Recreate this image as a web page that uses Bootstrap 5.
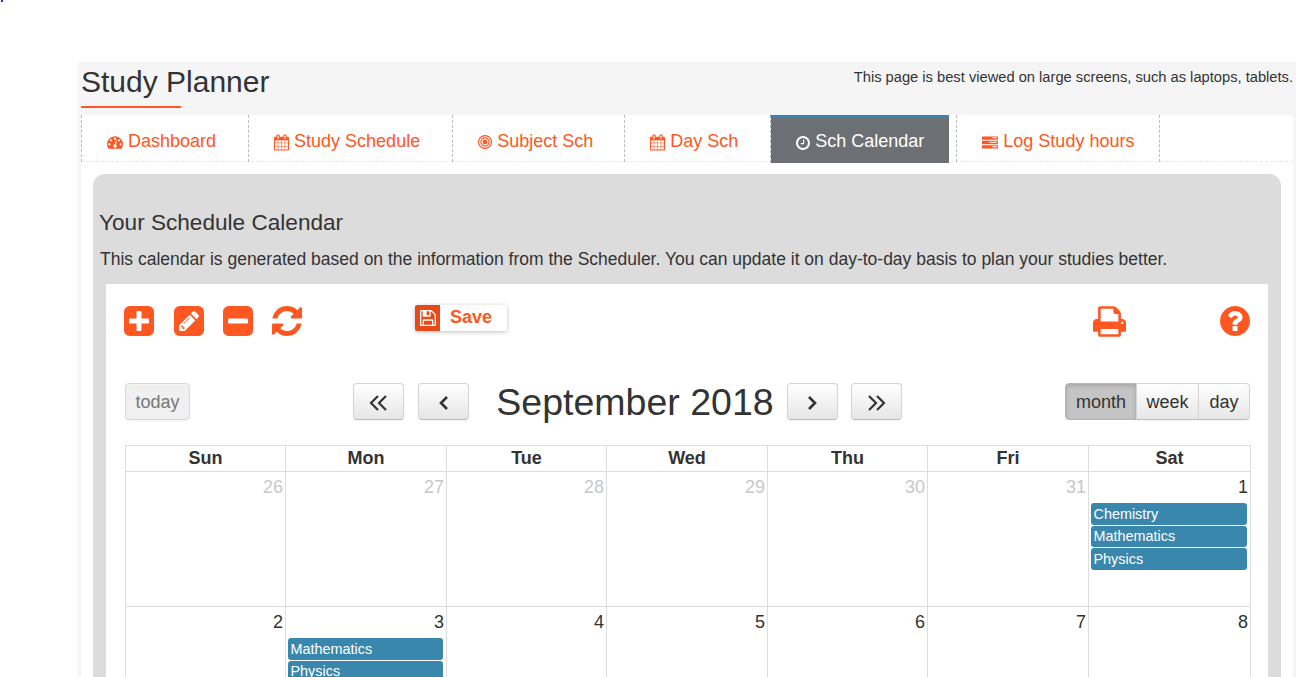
<!DOCTYPE html>
<html lang="en">
<head>
    <meta charset="UTF-8">
    <meta name="viewport" content="width=device-width, initial-scale=1.0">
    <title>Study Planner</title>
    <link href="https://cdn.jsdelivr.net/npm/bootstrap@5.3.0/dist/css/bootstrap.min.css" rel="stylesheet">
    <style>
        html, body { height: 100vh; overflow: hidden; }
        body { font-family: "Liberation Sans", Arial, sans-serif; font-size: 16px; color: #333; background: #fff; }
        .ico { fill: currentColor; display: inline-block; flex: none; }
        .top-dot { height: 62px; }
        .top-speck { display: block; width: 2px; height: 2px; margin-left: 1px; background: #3030e0; }
        .planner-wrap { margin-left: 78px; background: #f5f5f5; padding: 0 3px; }
        .planner-head { height: 53px; }
        .planner-title { font-size: 30px; line-height: 38px; margin: 0; padding-top: 1px; font-weight: 400; }
        .planner-rule { width: 100px; height: 2px; background: #ff5722; margin-top: 5px; }
        .planner-note { font-size: 14.7px; line-height: 20px; padding-top: 5px; }
        .planner-body { background: #fff; border-radius: 4px; }
        .tab-row { height: 47px; border-bottom: 1px dashed #e6e6e6; }
        .tab-item { height: 47px; padding: 5px 32px 0 25px; gap: 5px; font-size: 18px; color: #ff5722; text-decoration: none; border-left: 1px dashed #bbb; }
        .tab-item svg { margin-top: 2px; }
        .tab-item:nth-child(3) { padding-right: 31px; }
        .tab-item:last-child { border-right: 1px dashed #bbb; padding-right: 25px; }
        .tab-item.is-on { background: #6c7074; background-clip: padding-box; color: #fff; border-top: 3px solid #3a87ad; padding: 2px 25px 0; height: 48px; }
        .tab-item.is-on + .tab-item { margin-left: 7px; }
        .grey-panel { margin: 12px 12px 0; background: #dcdcdc; border-radius: 12px; padding: 36px 7px 0 7px; }
        .panel-title { font-size: 22.6px; line-height: 26px; margin: 0 0 12px -1px; font-weight: 400; }
        .panel-text { font-size: 17.5px; line-height: 22px; margin: 0 0 14px; white-space: nowrap; }
        .cal-sheet { margin: 0 6px; background: #fff; padding: 22px 18px 0 18px; }
        .tool-row { height: 31px; }
        .tool-btn { color: #ff5722; line-height: 0; }
        .tool-gap { margin-left: 19px; }
        .tool-gap-wide { margin-left: 20px; }
        .save-btn { width: 92px; height: 26px; margin: -1px 0 0 113px; background: #fff; border-radius: 2px; box-shadow: 0 1px 4px rgba(0,0,0,.25); color: #ff5722; font-weight: 700; font-size: 18px; overflow: hidden; }
        .save-ico { width: 25px; height: 26px; background: #e64a19; color: #fff; }
        .save-label { padding: 0 0 2px 10px; }
        .print-btn { margin-right: 94px; }
        .nav-row { margin-top: 46px; height: 37px; padding-left: 1px; }
        .fc-btn { height: 37px; padding: 1px 0 0; font-size: 18px; color: #333; border: 1px solid #d5d5d5; border-bottom-color: #bdbdbd; border-radius: 4px; background: linear-gradient(#fff, #e6e6e6); box-shadow: inset 0 1px 0 rgba(255,255,255,.2), 0 1px 2px rgba(0,0,0,.05); }
        .fc-btn.is-off { background: #f0f0f0; color: #777; border-color: #d8d8d8; width: 65px; }
        .fc-btn.is-on { background: #c4c4c4; border-color: #b5b5b5; box-shadow: inset 0 2px 4px rgba(0,0,0,.15); }
        .fc-arrow { width: 51px; }
        .fc-prev + .fc-prev { margin-left: 14px; }
        .fc-next + .fc-next { margin-left: 13px; }
        .fc-title { font-size: 37.5px; line-height: 37px; margin: 1px 13px 0 27px; font-weight: 400; white-space: nowrap; }
        .view-group .fc-btn { border-radius: 0; margin-left: -1px; }
        .view-group .fc-btn:first-child { border-radius: 4px 0 0 4px; margin-left: 0; width: 72px; }
        .view-group .fc-btn:nth-child(2) { width: 63px; }
        .view-group .fc-btn:last-child { border-radius: 0 4px 4px 0; width: 52px; }
        .cal-grid { table-layout: fixed; width: 1125px; margin: 25px 0 0 1px; border-collapse: collapse; }
        .cal-grid th, .cal-grid td { border: 1px solid #ddd; }
        .cal-grid th { height: 25px; width: 160px; padding-bottom: 2px; text-align: center; font-size: 18px; font-weight: 700; line-height: 22px; }
        .cal-grid th:nth-child(even) { width: 161px; }
        .cal-grid th:last-child { width: 162px; }
        .cal-grid td { height: 135px; vertical-align: top; padding: 0; }
        .day-num { font-size: 18px; line-height: 22px; text-align: right; padding: 4px 2px 0 0; margin-bottom: 5px; }
        .day-num.is-past { color: #c8c8c8; }
        .cal-event { background: #3a87ad; color: #fff; font-size: 14.4px; line-height: 17px; height: 21.6px; padding: 2.5px 2.5px 0; margin: 0 3px 1px 2px; border-radius: 3px; }
    </style>
</head>
<body>
    <svg width="0" height="0" class="position-absolute">
        <symbol id="i-dash" viewBox="0 0 1792 1792"><path d="M384 1152q0-53-37.500-90.500t-90.500-37.500-90.500 37.500-37.500 90.500 37.500 90.500 90.500 37.500 90.500-37.500 37.500-90.500zm192-448q0-53-37.500-90.500t-90.500-37.500-90.500 37.500-37.500 90.500 37.500 90.500 90.500 37.500 90.500-37.500 37.500-90.500zm428 481l101-382q6-26-7.500-48.500t-38.500-29.500-48 6.500-30 39.500l-101 382q-60 5-107 43.500t-63 98.500q-20 77 20 146t117 89 146-20 89-117q16-60-6-117t-72-91zm660-33q0-53-37.500-90.500t-90.500-37.500-90.500 37.500-37.500 90.500 37.500 90.500 90.500 37.500 90.500-37.500 37.500-90.500zm-640-640q0-53-37.500-90.500t-90.500-37.500-90.500 37.500-37.500 90.500 37.500 90.500 90.500 37.500 90.500-37.500 37.500-90.500zm448 192q0-53-37.500-90.500t-90.500-37.500-90.500 37.500-37.500 90.500 37.500 90.500 90.500 37.500 90.500-37.500 37.500-90.500zm320 448q0 261-141 483-19 29-54 29h-1402q-35 0-54-29-141-221-141-483 0-182 71-348t191-286 286-191 348-71 348 71 286 191 191 286 71 348z"/></symbol>
        <symbol id="i-cal" viewBox="0 0 1664 1792"><path d="M128 1664h288v-288h-288v288zm352 0h320v-288h-320v288zm-352-352h288v-320h-288v320zm352 0h320v-320h-320v320zm-352-384h288v-288h-288v288zm736 736h320v-288h-320v288zm-384-736h320v-288h-320v288zm768 736h288v-288h-288v288zm-384-352h320v-320h-320v320zm-352-864v-288q0-13-9.500-22.500t-22.500-9.500h-64q-13 0-22.500 9.500t-9.500 22.500v288q0 13 9.500 22.500t22.500 9.500h64q13 0 22.500-9.500t9.500-22.500zm736 864h288v-320h-288v320zm-384-384h320v-288h-320v288zm384 0h288v-288h-288v288zm32-480v-288q0-13-9.500-22.500t-22.500-9.500h-64q-13 0-22.500 9.500t-9.500 22.500v288q0 13 9.500 22.500t22.500 9.500h64q13 0 22.500-9.500t9.500-22.500zm384-64v1280q0 52-38 90t-90 38h-1408q-52 0-90-38t-38-90v-1280q0-52 38-90t90-38h128v-96q0-66 47-113t113-47h64q66 0 113 47t47 113v96h384v-96q0-66 47-113t113-47h64q66 0 113 47t47 113v96h128q52 0 90 38t38 90z"/></symbol>
        <symbol id="i-eye" viewBox="128 128 1536 1536"><path d="M1152 896q0 106-75 181t-181 75-181-75-75-181 75-181 181-75 181 75 75 181zm128 0q0-159-112.500-271.500t-271.500-112.500-271.500 112.500-112.500 271.500 112.500 271.500 271.500 112.500 271.500-112.500 112.500-271.500zm128 0q0 212-150 362t-362 150-362-150-150-362 150-362 362-150 362 150 150 362zm128 0q0-130-51-248.500t-136.500-204-204-136.500-248.500-51-248.500 51-204 136.500-136.500 204-51 248.500 51 248.500 136.500 204 204 136.500 248.500 51 248.500-51 204-136.500 136.500-204 51-248.500zm128 0q0 209-103 385.500t-279.500 279.500-385.500 103-385.500-103-279.500-279.500-103-385.500 103-385.500 279.500-279.500 385.500-103 385.500 103 279.500 279.500 103 385.500z"/></symbol>
        <symbol id="i-clock" viewBox="128 128 1536 1536"><path d="M1024 544v448q0 14-9 23t-23 9h-320q-14 0-23-9t-9-23v-64q0-14 9-23t23-9h224v-352q0-14 9-23t23-9h64q14 0 23 9t9 23zm416 352q0-148-73-273t-198-198-273-73-273 73-198 198-73 273 73 273 198 198 273 73 273-73 198-198 73-273zm224 0q0 209-103 385.500t-279.500 279.500-385.500 103-385.500-103-279.500-279.500-103-385.500 103-385.500 279.500-279.500 385.500-103 385.500 103 279.500 279.500 103 385.500z"/></symbol>
        <symbol id="i-log" viewBox="0 0 17 13"><path fill-rule="evenodd" d="M0 0h17v3.500H0zM11 1v1h5V1zM0 4.750h17v3.500H0zM8 5.750v1h8v-1zM0 9.500h17V13H0zM11 10.500v1h5v-1z"/></symbol>
        <symbol id="i-plus" viewBox="128 128 1536 1536"><path d="M1408 960v-128q0-26-19-45t-45-19h-320v-320q0-26-19-45t-45-19h-128q-26 0-45 19t-19 45v320h-320q-26 0-45 19t-19 45v128q0 26 19 45t45 19h320v320q0 26 19 45t45 19h128q26 0 45-19t19-45v-320h320q26 0 45-19t19-45zm256-544v960q0 119-84.500 203.500t-203.500 84.500h-960q-119 0-203.500-84.500t-84.500-203.500v-960q0-119 84.500-203.500t203.500-84.500h960q119 0 203.500 84.500t84.500 203.500z"/></symbol>
        <symbol id="i-minus" viewBox="128 128 1536 1536"><path d="M1408 960v-128q0-26-19-45t-45-19h-896q-26 0-45 19t-19 45v128q0 26 19 45t45 19h896q26 0 45-19t19-45zm256-544v960q0 119-84.500 203.500t-203.500 84.500h-960q-119 0-203.500-84.500t-84.500-203.500v-960q0-119 84.500-203.500t203.500-84.500h960q119 0 203.500 84.500t84.500 203.500z"/></symbol>
        <symbol id="i-pen" viewBox="0 0 1536 1536"><path d="M404 980l152 152-52 52h-56v-96h-96v-56zm414-390q14 13-3 30l-291 291q-17 17-30 3-14-13 3-30l291-291q17-17 30-3zm-274 690l544-544-288-288-544 544v288h288zm608-608l92-92q28-28 28-68t-28-68l-152-152q-28-28-68-28t-68 28l-92 92zm384-384v960q0 119-84.500 203.500t-203.500 84.500h-960q-119 0-203.500-84.500t-84.500-203.500v-960q0-119 84.500-203.500t203.500-84.500h960q119 0 203.500 84.500t84.500 203.500z"/></symbol>
        <symbol id="i-sync" viewBox="128 128 1536 1536"><path d="M1639 1056q0 5-1 7-64 268-268 434.500t-478 166.500q-146 0-282.500-55t-243.500-157l-129 129q-19 19-45 19t-45-19-19-45v-448q0-26 19-45t45-19h448q26 0 45 19t19 45-19 45l-137 137q71 66 161 102t187 36q134 0 250-65t186-179q11-17 53-117 8-23 30-23h192q13 0 22.500 9.500t9.500 22.500zm25-800v448q0 26-19 45t-45 19h-448q-26 0-45-19t-19-45 19-45l138-138q-148-137-349-137-134 0-250 65t-186 179q-11 17-53 117-8 23-30 23h-199q-13 0-22.500-9.500t-9.500-22.500v-7q65-268 270-434.500t480-166.500q146 0 284 55.500t245 156.500l130-129q19-19 45-19t45 19 19 45z"/></symbol>
        <symbol id="i-help" viewBox="128 128 1536 1536"><path d="M1024 1376v-192q0-14-9-23t-23-9h-192q-14 0-23 9t-9 23v192q0 14 9 23t23 9h192q14 0 23-9t9-23zm256-672q0-88-55.500-163t-138.500-116-170-41q-243 0-371 213-15 24 8 42l132 100q7 6 19 6 16 0 25-12 53-68 86-92 34-24 86-24 48 0 85.500 26t37.500 59q0 38-20 61t-68 45q-63 28-115.500 86.500t-52.500 125.500v36q0 14 9 23t23 9h192q14 0 23-9t9-23q0-19 21.500-49.500t54.500-49.500q32-18 49-28.500t46-35 44.500-48 28-60.500 12.500-81zm384 192q0 209-103 385.500t-279.500 279.500-385.500 103-385.500-103-279.500-279.500-103-385.500 103-385.500 279.500-279.500 385.500-103 385.500 103 279.500 279.500 103 385.500z"/></symbol>
        <symbol id="i-print" viewBox="64 128 1664 1536"><path d="M448 1536h896v-256h-896v256zm0-640h896v-384h-160q-40 0-68-28t-28-68v-160h-640v640zm1152 64q0-26-19-45t-45-19-45 19-19 45 19 45 45 19 45-19 19-45zm128 0v416q0 13-9.500 22.500t-22.500 9.500h-224v160q0 40-28 68t-68 28h-960q-40 0-68-28t-28-68v-160h-224q-13 0-22.500-9.500t-9.500-22.500v-416q0-79 56.500-135.500t135.500-56.500h64v-544q0-40 28-68t68-28h672q40 0 88 20t76 48l152 152q28 28 48 76t20 88v256h64q79 0 135.500 56.500t56.500 135.500z"/></symbol>
        <symbol id="i-disk" viewBox="128 128 1536 1536"><path d="M512 1536h768v-384h-768v384zm896 0h128v-896q0-14-10-38.500t-20-34.500l-281-281q-10-10-34-20t-39-10v416q0 40-28 68t-68 28h-576q-40 0-68-28t-28-68v-416h-128v1280h128v-416q0-40 28-68t68-28h832q40 0 68 28t28 68v416zm-384-928v-320q0-13-9.500-22.500t-22.500-9.500h-192q-13 0-22.500 9.500t-9.500 22.500v320q0 13 9.500 22.500t22.500 9.500h192q13 0 22.500-9.500t9.500-22.500zm640 32v928q0 40-28 68t-68 28h-1344q-40 0-68-28t-28-68v-1344q0-40 28-68t68-28h928q40 0 88 20t76 48l280 280q28 28 48 76t20 88z"/></symbol>
    </svg>

    <div class="top-dot"><span class="top-speck"></span></div>

    <div class="planner-wrap">
        <div class="planner-head d-flex justify-content-between">
            <div>
                <h1 class="planner-title">Study Planner</h1>
                <div class="planner-rule"></div>
            </div>
            <div class="planner-note">This page is best viewed on large screens, such as laptops, tablets.</div>
        </div>

        <div class="planner-body">
            <div class="tab-row d-flex">
                <a class="tab-item d-flex align-items-center" href="#"><svg class="ico" width="16" height="16"><use href="#i-dash"/></svg>Dashboard</a>
                <a class="tab-item d-flex align-items-center" href="#"><svg class="ico" width="15" height="17"><use href="#i-cal"/></svg>Study Schedule</a>
                <a class="tab-item d-flex align-items-center" href="#"><svg class="ico" width="14" height="14"><use href="#i-eye"/></svg>Subject Sch</a>
                <a class="tab-item d-flex align-items-center" href="#"><svg class="ico" width="15" height="17"><use href="#i-cal"/></svg>Day Sch</a>
                <a class="tab-item is-on d-flex align-items-center" href="#"><svg class="ico" width="14" height="14"><use href="#i-clock"/></svg>Sch Calendar</a>
                <a class="tab-item d-flex align-items-center" href="#"><svg class="ico" width="16" height="13"><use href="#i-log"/></svg>Log Study hours</a>
            </div>

            <div class="grey-panel">
                <h2 class="panel-title">Your Schedule Calendar</h2>
                <p class="panel-text">This calendar is generated based on the information from the Scheduler. You can update it on day-to-day basis to plan your studies better.</p>

                <div class="cal-sheet">
                    <div class="tool-row d-flex align-items-start">
                        <a class="tool-btn" href="#"><svg class="ico" width="30" height="30"><use href="#i-plus"/></svg></a>
                        <a class="tool-btn tool-gap-wide" href="#"><svg class="ico" width="30" height="30"><use href="#i-pen"/></svg></a>
                        <a class="tool-btn tool-gap" href="#"><svg class="ico" width="30" height="30"><use href="#i-minus"/></svg></a>
                        <a class="tool-btn tool-gap" href="#"><svg class="ico" width="30" height="30"><use href="#i-sync"/></svg></a>
                        <a class="save-btn d-flex align-items-center text-decoration-none" href="#">
                            <span class="save-ico d-flex align-items-center justify-content-center"><svg class="ico" width="16" height="16"><use href="#i-disk"/></svg></span>
                            <span class="save-label">Save</span>
                        </a>
                        <a class="tool-btn print-btn ms-auto" href="#"><svg class="ico" width="33" height="31"><use href="#i-print"/></svg></a>
                        <a class="tool-btn" href="#"><svg class="ico" width="30" height="30"><use href="#i-help"/></svg></a>
                    </div>

                    <div class="nav-row d-flex justify-content-between">
                        <button class="fc-btn is-off" type="button">today</button>
                        <div class="d-flex align-items-center">
                            <button class="fc-btn fc-arrow fc-prev" type="button" aria-label="previous year"><svg width="20" height="16" fill="none" stroke="#333" stroke-width="2.200"><path d="M9 1 2 8l7 7M17 1l-7 7 7 7"/></svg></button>
                            <button class="fc-btn fc-arrow fc-prev" type="button" aria-label="previous month"><svg width="12" height="16" fill="none" stroke="#333" stroke-width="2.600"><path d="M9 2 3 8l6 6"/></svg></button>
                            <h2 class="fc-title">September 2018</h2>
                            <button class="fc-btn fc-arrow fc-next" type="button" aria-label="next month"><svg width="12" height="16" fill="none" stroke="#333" stroke-width="2.600"><path d="m3 2 6 6-6 6"/></svg></button>
                            <button class="fc-btn fc-arrow fc-next" type="button" aria-label="next year"><svg width="20" height="16" fill="none" stroke="#333" stroke-width="2.200"><path d="m3 1 7 7-7 7M11 1l7 7-7 7"/></svg></button>
                        </div>
                        <div class="view-group d-flex">
                            <button class="fc-btn is-on" type="button">month</button>
                            <button class="fc-btn" type="button">week</button>
                            <button class="fc-btn" type="button">day</button>
                        </div>
                    </div>

                    <table class="cal-grid">
                        <thead>
                            <tr><th>Sun</th><th>Mon</th><th>Tue</th><th>Wed</th><th>Thu</th><th>Fri</th><th>Sat</th></tr>
                        </thead>
                        <tbody>
                            <tr>
                                <td><div class="day-num is-past">26</div></td>
                                <td><div class="day-num is-past">27</div></td>
                                <td><div class="day-num is-past">28</div></td>
                                <td><div class="day-num is-past">29</div></td>
                                <td><div class="day-num is-past">30</div></td>
                                <td><div class="day-num is-past">31</div></td>
                                <td><div class="day-num">1</div>
                                    <div class="cal-event">Chemistry</div>
                                    <div class="cal-event">Mathematics</div>
                                    <div class="cal-event">Physics</div>
                                </td>
                            </tr>
                            <tr>
                                <td><div class="day-num">2</div></td>
                                <td><div class="day-num">3</div>
                                    <div class="cal-event">Mathematics</div>
                                    <div class="cal-event">Physics</div>
                                </td>
                                <td><div class="day-num">4</div></td>
                                <td><div class="day-num">5</div></td>
                                <td><div class="day-num">6</div></td>
                                <td><div class="day-num">7</div></td>
                                <td><div class="day-num">8</div></td>
                            </tr>
                        </tbody>
                    </table>
                </div>
            </div>
        </div>
    </div>

    <script src="https://cdn.jsdelivr.net/npm/bootstrap@5.3.0/dist/js/bootstrap.bundle.min.js"></script>
</body>
</html>
